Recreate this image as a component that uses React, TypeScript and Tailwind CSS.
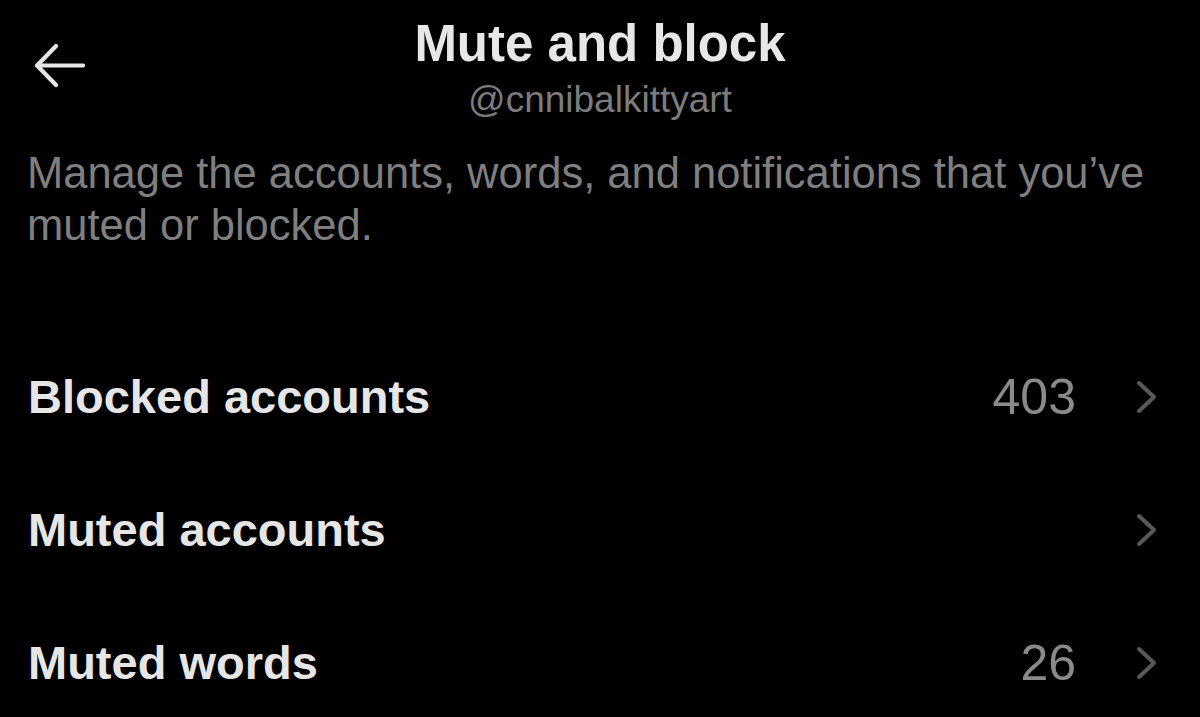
const rows = [
  { label: 'Blocked accounts', count: '403' },
  { label: 'Muted accounts', count: '' },
  { label: 'Muted words', count: '26' },
];

function BackArrow() {
  return (
    <svg width="52" height="48" viewBox="0 0 52 48" fill="none">
      <path
        d="M50 23.5H4M23 4L4 23.5L23 43"
        stroke="#e6e6e6"
        strokeWidth="4.2"
        strokeLinecap="round"
        strokeLinejoin="round"
      />
    </svg>
  );
}

function Chevron() {
  return (
    <svg width="22" height="34" viewBox="0 0 22 34" fill="none">
      <path
        d="M3 3L18 17L3 31"
        stroke="#595959"
        strokeWidth="4"
        strokeLinecap="round"
        strokeLinejoin="round"
      />
    </svg>
  );
}

export default function App() {
  return (
    <div className="h-[717px] w-[1200px] overflow-hidden bg-black font-['Liberation_Sans',Arial,sans-serif]">
      <header className="flex items-start">
        <div className="w-[140px] pl-[33px] pt-[42px]">
          <BackArrow />
        </div>
        <div className="flex-1 pt-[14px] text-center">
          <h1 className="text-[51px] font-bold leading-[60px] text-[#e7e7e7]">Mute and block</h1>
          <p className="mt-[4px] text-[37px] leading-[44px] text-[#7c7c7c]">@cnnibalkittyart</p>
        </div>
        <div className="w-[140px]" />
      </header>

      <p className="mt-[25px] pl-[27px] pr-[20px] text-[43.5px] leading-[52px] text-[#7f7f7f]">
        Manage the accounts, words, and notifications that you’ve muted or blocked.
      </p>

      <ul className="mt-[79px]">
        {rows.map((r) => (
          <li key={r.label} className="flex h-[133px] items-center justify-between pl-[28px] pr-[42px]">
            <span className="text-[47px] font-bold leading-[56px] text-[#e6e6e6]">{r.label}</span>
            <div className="flex items-center gap-[60px]">
              {r.count && <span className="text-[50px] leading-[56px] text-[#8a8a8a]">{r.count}</span>}
              <Chevron />
            </div>
          </li>
        ))}
      </ul>
    </div>
  );
}
